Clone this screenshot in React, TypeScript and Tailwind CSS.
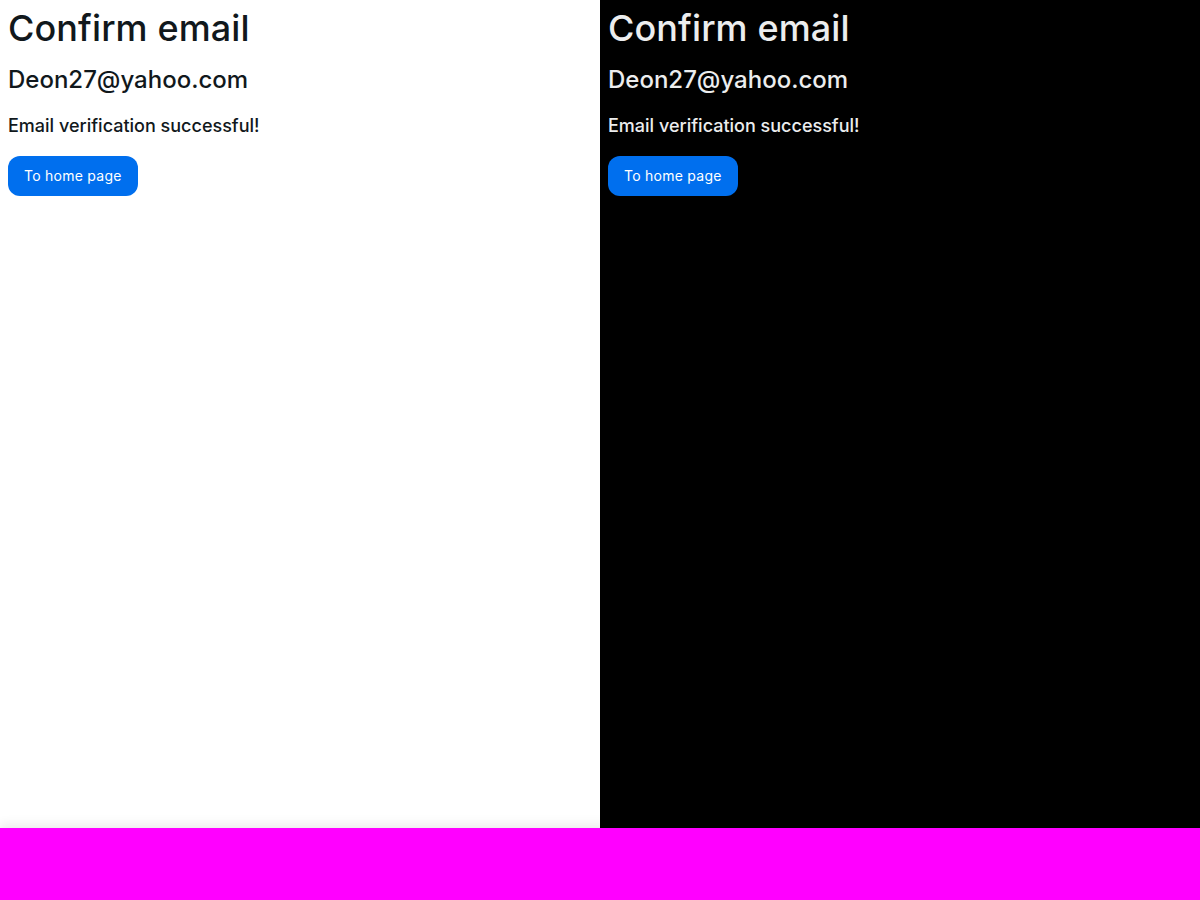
import React from "react";

function Panel({ dark }: { dark: boolean }) {
  return (
    <div
      className={
        "w-[600px] h-[828px] p-2 flex flex-col items-start " +
        (dark ? "bg-black text-[#ECEDEE]" : "bg-white text-[#11181C]")
      }
    >
      <h1 className="text-[36px] leading-[40px] font-medium tracking-[0.1px]">Confirm email</h1>
      <h2 className="text-[24px] leading-[32px] mt-[16px] font-medium">Deon27@yahoo.com</h2>
      <p className="text-[18px] leading-[28px] mt-[16px] font-medium">Email verification successful!</p>
      <button className="mt-[16px] h-10 px-4 pb-[2px] rounded-xl bg-[#006FEE] text-white text-[14px] tracking-[0.25px]">
        To home page
      </button>
    </div>
  );
}

export default function App() {
  return (
    <div className="w-[1200px] h-[900px] bg-[#ff00ff] flex flex-col" style={{ fontFamily: "Inter, 'Noto Sans', sans-serif" }}>
      <div className="flex">
        <Panel dark={false} />
        <Panel dark={true} />
      </div>
      <div className="flex-1 bg-[#ff00ff] shadow-[0_-4px_10px_rgba(0,0,0,0.08)]" />
    </div>
  );
}
